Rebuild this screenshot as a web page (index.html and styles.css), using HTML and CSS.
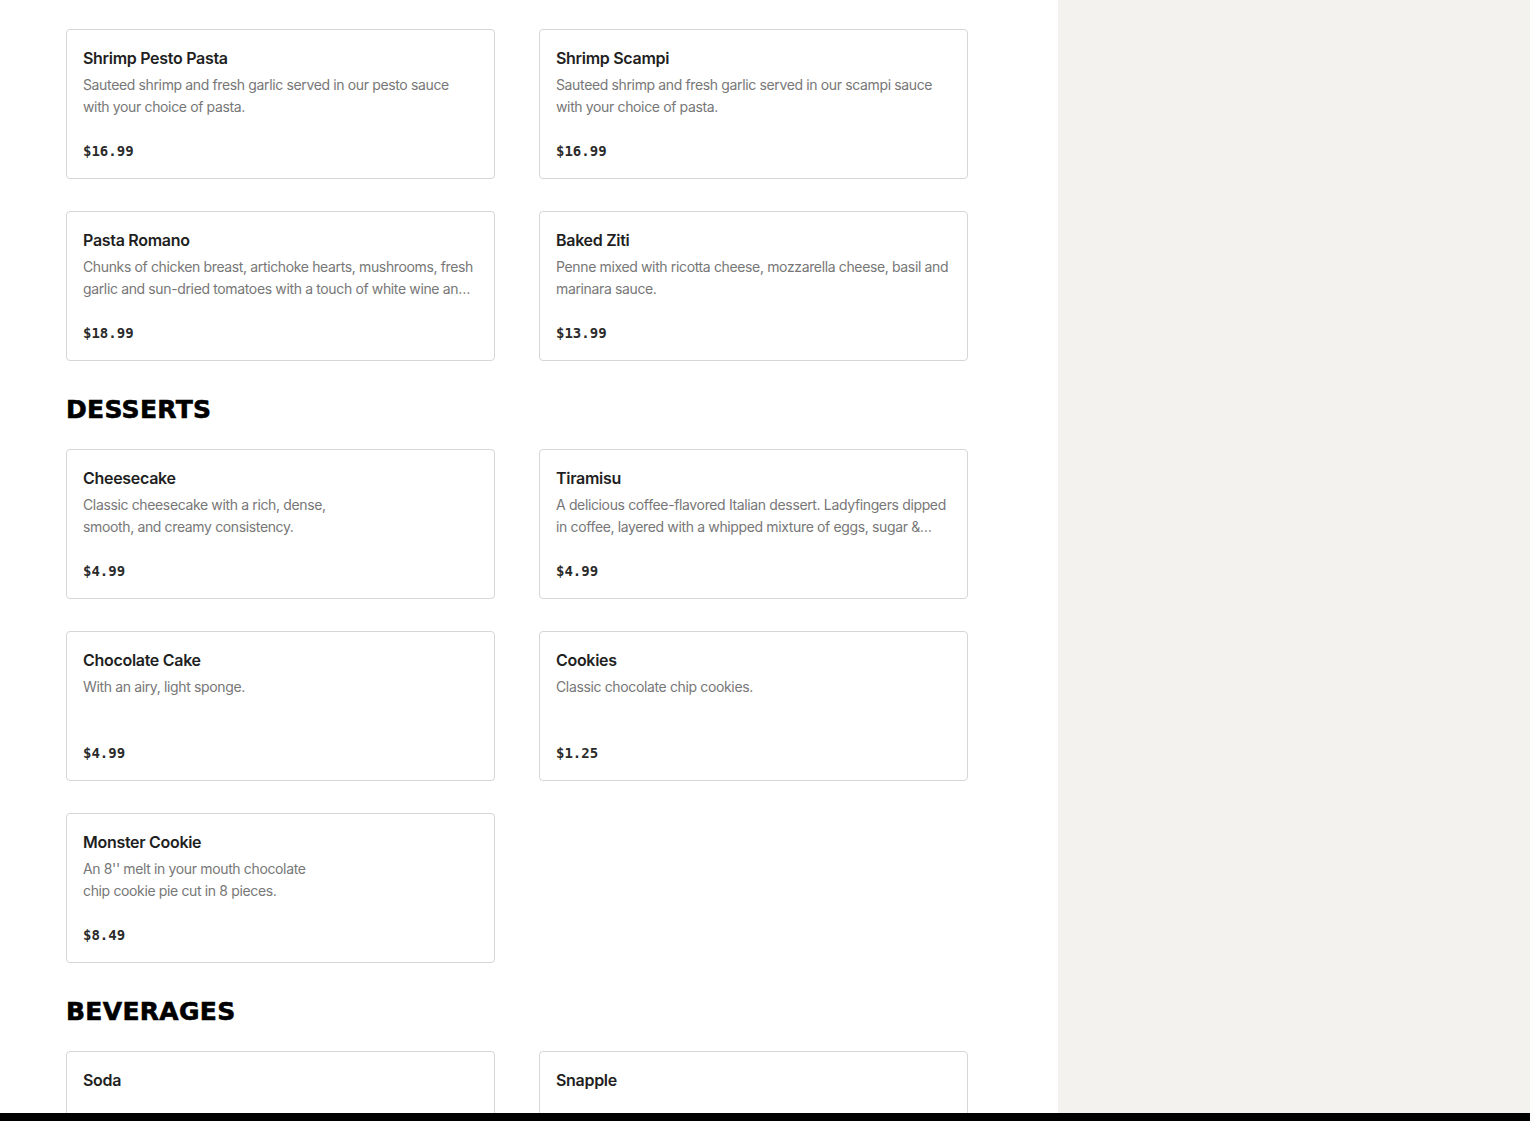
FILE: index.html
```
<!DOCTYPE html>
<html lang="en">
<head>
<meta charset="utf-8">
<title>Menu</title>
<link rel="stylesheet" href="styles.css">
</head>
<body>
<div class="app">
  <main class="menu">
    <section class="section first">
      <div class="grid">
        <article class="card">
          <h3 class="card-title">Shrimp Pesto Pasta</h3>
          <p class="card-desc">Sauteed shrimp and fresh garlic served in our pesto sauce with your choice of pasta.</p>
          <div class="card-price">$16.99</div>
        </article>
        <article class="card">
          <h3 class="card-title">Shrimp Scampi</h3>
          <p class="card-desc">Sauteed shrimp and fresh garlic served in our scampi sauce with your choice of pasta.</p>
          <div class="card-price">$16.99</div>
        </article>
        <article class="card">
          <h3 class="card-title">Pasta Romano</h3>
          <p class="card-desc">Chunks of chicken breast, artichoke hearts, mushrooms, fresh garlic and sun-dried tomatoes with a touch of white wine and cream sauce.</p>
          <div class="card-price">$18.99</div>
        </article>
        <article class="card">
          <h3 class="card-title">Baked Ziti</h3>
          <p class="card-desc">Penne mixed with ricotta cheese, mozzarella cheese, basil and marinara sauce.</p>
          <div class="card-price">$13.99</div>
        </article>
      </div>
    </section>

    <section class="section">
      <h2 class="section-title">DESSERTS</h2>
      <div class="grid">
        <article class="card">
          <h3 class="card-title">Cheesecake</h3>
          <p class="card-desc">Classic cheesecake with a rich, dense,<br>smooth, and creamy consistency.</p>
          <div class="card-price">$4.99</div>
        </article>
        <article class="card">
          <h3 class="card-title">Tiramisu</h3>
          <p class="card-desc">A delicious coffee-flavored Italian dessert. Ladyfingers dipped in coffee, layered with a whipped mixture of eggs, sugar &amp; mascarpone cheese, flavored with cocoa.</p>
          <div class="card-price">$4.99</div>
        </article>
        <article class="card">
          <h3 class="card-title">Chocolate Cake</h3>
          <p class="card-desc">With an airy, light sponge.</p>
          <div class="card-price">$4.99</div>
        </article>
        <article class="card">
          <h3 class="card-title">Cookies</h3>
          <p class="card-desc">Classic chocolate chip cookies.</p>
          <div class="card-price">$1.25</div>
        </article>
        <article class="card">
          <h3 class="card-title">Monster Cookie</h3>
          <p class="card-desc">An 8'' melt in your mouth chocolate<br>chip cookie pie cut in 8 pieces.</p>
          <div class="card-price">$8.49</div>
        </article>
      </div>
    </section>

    <section class="section">
      <h2 class="section-title">BEVERAGES</h2>
      <div class="grid">
        <article class="card">
          <h3 class="card-title">Soda</h3>
          <p class="card-desc"></p>
          <div class="card-price">$1.99</div>
        </article>
        <article class="card">
          <h3 class="card-title">Snapple</h3>
          <p class="card-desc"></p>
          <div class="card-price">$2.49</div>
        </article>
      </div>
    </section>
  </main>
  <aside class="side"></aside>
</div>
<div class="bottom-bar"></div>
</body>
</html>
```
FILE: styles.css
```
* { box-sizing: border-box; }
html, body { margin: 0; padding: 0; height: 100%; }
body {
  font-family: Inter, "Noto Sans", "Liberation Sans", sans-serif;
  color: #1f1f1f;
  background: #ffffff;
  overflow: hidden;
}
.app {
  display: flex;
  height: 100vh;
  overflow: hidden;
}
.menu {
  width: 1058px;
  flex: none;
  padding: 29px 90px 0 66px;
  background: #ffffff;
}
.side {
  flex: 1;
  background: #f3f2ef;
}
.section { margin-top: 33px; }
.section.first { margin-top: 0; }
.section-title {
  margin: 0 0 23px;
  font-family: "DejaVu Sans", sans-serif;
  font-weight: 700;
  font-size: 25px;
  line-height: 32px;
  letter-spacing: 0.3px;
  -webkit-text-stroke: 0.6px #000;
  color: #000;
}
.grid {
  display: grid;
  grid-template-columns: 429px 429px;
  column-gap: 44px;
  row-gap: 32px;
}
.card {
  border: 1px solid #d6d6d6;
  border-radius: 4px;
  padding: 16px;
  background: #fff;
  height: 150px;
}
.card-title {
  margin: 0;
  font-size: 16px;
  line-height: 24px;
  font-weight: 600;
  letter-spacing: -0.3px;
  color: #1f1f1f;
}
.card-desc {
  margin: 4px 0 0;
  font-size: 14px;
  line-height: 22px;
  letter-spacing: -0.36px;
  color: #777777;
  height: 44px;
  display: -webkit-box;
  -webkit-line-clamp: 2;
  -webkit-box-orient: vertical;
  overflow: hidden;
}
.card-price {
  margin-top: 23px;
  font-family: "DejaVu Sans Mono", "Liberation Mono", monospace;
  font-weight: 700;
  font-size: 14px;
  line-height: 20px;
  color: #2a2a2a;
}
.bottom-bar {
  position: fixed;
  left: 0;
  right: 0;
  bottom: 0;
  height: 8px;
  background: #000;
}
```
